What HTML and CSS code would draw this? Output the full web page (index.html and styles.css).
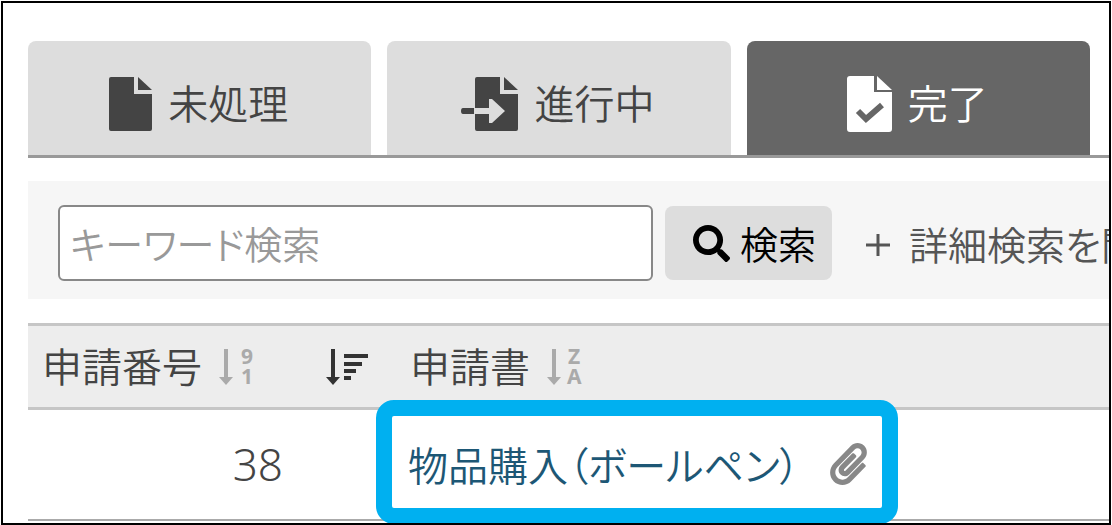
FILE: index.html
```html
<!DOCTYPE html>
<html lang="ja">
<head>
    <meta charset="UTF-8">
    <meta name="viewport" content="width=device-width, initial-scale=1.0">
    <title>申請一覧</title>
    <link rel="stylesheet" href="styles.css">
</head>
<body>
    <main class="frame">
        <nav class="tabs">
            <button type="button" class="tab">
                <svg viewBox="0 0 43 54" width="43" height="54" fill="currentColor" aria-hidden="true">
                    <path d="M2 0H25V17H43V52Q43 54 41 54H2Q0 54 0 52V2Q0 0 2 0Z"/>
                    <path d="M29 0L43 13H29Z"/>
                </svg>
                <span>未処理</span>
            </button>
            <button type="button" class="tab">
                <svg viewBox="0 0 57 54" width="57" height="54" fill="currentColor" aria-hidden="true">
                    <path d="M16 0H39V17H57V52Q57 54 55 54H16Q14 54 14 52V37H28V46H31L44 34L31 22H28V31H14V2Q14 0 16 0Z"/>
                    <path d="M43 0L57 13H43Z"/>
                    <path d="M2 31H13V37H2Q0 37 0 34Q0 31 2 31Z"/>
                </svg>
                <span>進行中</span>
            </button>
            <button type="button" class="tab active">
                <svg viewBox="0 0 45 56" width="45" height="56" fill="currentColor" aria-hidden="true">
                    <path d="M3 0H27V16H45V53Q45 56 42 56H3Q0 56 0 53V3Q0 0 3 0Z"/>
                    <path d="M30 0L45 14H30Z"/>
                    <path d="M11 35L19 43L35 29" fill="none" stroke="#666" stroke-width="6"/>
                </svg>
                <span>完了</span>
            </button>
        </nav>

        <form class="search">
            <input type="text" class="keyword" placeholder="キーワード検索" aria-label="キーワード検索">
            <button type="button" class="search-btn">
                <svg viewBox="0 0 512 512" width="37" height="37" fill="currentColor" aria-hidden="true">
                    <path d="M505 442.7L405.3 343c-4.5-4.5-10.6-7-17-7H372c27.6-35.3 44-79.7 44-128C416 93.1 322.9 0 208 0S0 93.1 0 208s93.1 208 208 208c48.3 0 92.7-16.4 128-44v16.3c0 6.4 2.5 12.5 7 17l99.7 99.7c9.4 9.4 24.6 9.4 33.9 0l28.3-28.3c9.4-9.4 9.4-24.6.1-34zM208 336c-70.7 0-128-57.2-128-128 0-70.7 57.2-128 128-128 70.7 0 128 57.2 128 128 0 70.7-57.2 128-128 128z"/>
                </svg>
                <span>検索</span>
            </button>
            <a href="#" class="detail">
                <svg viewBox="0 0 26 26" width="26" height="26" fill="none" stroke="currentColor" stroke-width="3" aria-hidden="true">
                    <path d="M13 4V26M1 15H25"/>
                </svg>
                <span>詳細検索を開く</span>
            </a>
        </form>

        <table class="list">
            <thead>
                <tr>
                    <th class="col-no">
                        <div class="head">
                            <span>申請番号</span>
                            <svg class="sort" viewBox="0 0 34 36" width="34" height="36" aria-hidden="true">
                                <path d="M4 0H8V28H13L6 36L-1 28H4Z"/>
                                <text x="21" y="15">9</text>
                                <text x="21" y="35">1</text>
                            </svg>
                        </div>
                    </th>
                    <th class="col-sort">
                        <svg class="sort current" viewBox="0 0 41 36" width="41" height="36" aria-hidden="true">
                            <path d="M4 0H8V28H13L6 36L-1 28H4Z"/>
                            <path d="M17 5H41V9H17ZM17 13H35V17H17ZM17 20H29V24H17ZM17 27H24V31H17Z"/>
                        </svg>
                    </th>
                    <th class="col-doc">
                        <div class="head">
                            <span>申請書</span>
                            <svg class="sort" viewBox="0 0 34 36" width="34" height="36" aria-hidden="true">
                                <path d="M4 0H8V28H13L6 36L-1 28H4Z"/>
                                <text x="20" y="15">Z</text>
                                <text x="19" y="35">A</text>
                            </svg>
                        </div>
                    </th>
                </tr>
            </thead>
            <tbody>
                <tr>
                    <td class="col-no">38</td>
                    <td class="col-sort"></td>
                    <td class="col-doc">
                        <div class="doc">
                            <a href="#">物品購入（ボールペン）</a>
                            <svg class="clip" viewBox="0 0 448 512" width="37" height="42" fill="currentColor" aria-hidden="true">
                                <path d="M43.246 466.142c-58.43-60.289-57.341-157.511 1.386-217.581L254.392 34c44.316-45.332 116.351-45.336 160.671 0 43.89 44.894 43.943 117.329 0 162.276L232.214 383.128c-29.855 30.537-78.633 30.111-107.982-.998-28.275-29.97-27.368-77.473 1.452-106.953l143.743-146.835c6.182-6.314 16.312-6.422 22.626-.241l22.861 22.379c6.315 6.182 6.422 16.312.241 22.626L171.427 319.927c-4.932 5.045-5.236 13.428-.648 18.292 4.372 4.634 11.245 4.711 15.688.165l182.849-186.851c19.613-20.062 19.613-52.725-.011-72.798-19.189-19.627-49.957-19.637-69.154 0L90.39 293.295c-34.763 35.56-35.299 93.12-1.191 128.313 34.01 35.093 88.985 35.137 123.058.286l172.06-175.999c6.177-6.319 16.307-6.433 22.626-.256l22.877 22.364c6.319 6.177 6.434 16.307.256 22.626l-172.06 175.998c-59.576 60.938-155.943 60.216-215.977-.685z"/>
                            </svg>
                        </div>
                    </td>
                </tr>
            </tbody>
        </table>
    </main>
</body>
</html>
```
FILE: styles.css
```css
* {
    box-sizing: border-box;
}

body {
    margin: 0;
    padding: 1px;
    background: #fff;
    color: #444;
    font-family: "Noto Sans CJK JP", sans-serif;
    font-size: 40px;
    font-weight: 350;
    line-height: 48px;
    font-feature-settings: "palt";
}

button,
input {
    font: inherit;
    font-feature-settings: inherit;
    color: inherit;
}

a {
    text-decoration: none;
}

svg {
    display: block;
    flex: none;
    overflow: visible;
}

.frame {
    border: 2px solid #000;
    padding: 38px 0 2px 25px;
    overflow: hidden;
}

/* タブ */
.tabs {
    display: grid;
    grid-template-columns: repeat(3, 1fr);
    gap: 16px;
    padding-right: 19px;
    border-bottom: 3px solid #999;
}

.tab {
    display: flex;
    align-items: center;
    justify-content: center;
    gap: 16px;
    height: 114px;
    padding: 12px 2px 0 0;
    border: 0;
    border-radius: 8px 8px 0 0;
    background: #ddd;
}

.tab.active {
    background: #666;
    color: #fff;
}

.tab span,
.head span {
    padding-bottom: 4px;
}

/* 検索 */
.search {
    display: flex;
    align-items: center;
    margin-top: 23px;
    padding: 24px 0 18px 30px;
    background: #f6f6f6;
    white-space: nowrap;
}

.keyword {
    flex: 1;
    min-width: 0;
    height: 76px;
    padding: 0 10px 2px;
    border: 2px solid #888;
    border-radius: 6px;
    background: #fff;
    font-size: 38px;
}

.keyword::placeholder {
    color: #999;
    opacity: 1;
}

.search-btn {
    display: flex;
    align-items: center;
    gap: 10px;
    height: 74px;
    margin-left: 12px;
    padding: 0 16px 0 28px;
    border: 0;
    border-radius: 8px;
    background: #ddd;
    color: #000;
    font-size: 38px;
}

.detail {
    display: flex;
    align-items: center;
    gap: 18px;
    width: 244px;
    margin-left: 33px;
    color: #555;
    font-size: 39px;
    overflow: hidden;
}

/* 一覧 */
.list {
    width: 100%;
    margin-top: 24px;
    border-collapse: collapse;
    table-layout: fixed;
}

.list th {
    height: 84px;
    padding: 0 0 0 14px;
    border-top: 3px solid #c6c6c6;
    border-bottom: 3px solid #c6c6c6;
    background: #ededed;
    font-weight: inherit;
    text-align: left;
    white-space: nowrap;
}

.list td {
    height: 111px;
    padding: 0 16px 0 12px;
    border-bottom: 2px solid #aaa;
}

.list .col-no {
    width: 271px;
}

.list .col-sort {
    width: 97px;
    padding-left: 28px;
}

.list td.col-no {
    font-family: "Noto Sans", sans-serif;
    font-size: 44px;
    text-align: right;
}

.head {
    display: flex;
    align-items: center;
    gap: 18px;
}

.sort {
    fill: #aaa;
    font-family: "Noto Sans", sans-serif;
    font-size: 21px;
    font-weight: 700;
}

.sort.current {
    fill: #333;
}

.doc {
    position: relative;
    display: inline-flex;
    align-items: center;
    gap: 30px;
    white-space: nowrap;
}

.doc a {
    color: #1d5775;
}

/* 対象の申請書を囲む枠 */
.doc::after {
    content: "";
    position: absolute;
    inset: -40px -31px -36px -32px;
    border: 16px solid #00b0f0;
    border-radius: 18px;
    pointer-events: none;
}

.clip {
    color: #888;
}
```
